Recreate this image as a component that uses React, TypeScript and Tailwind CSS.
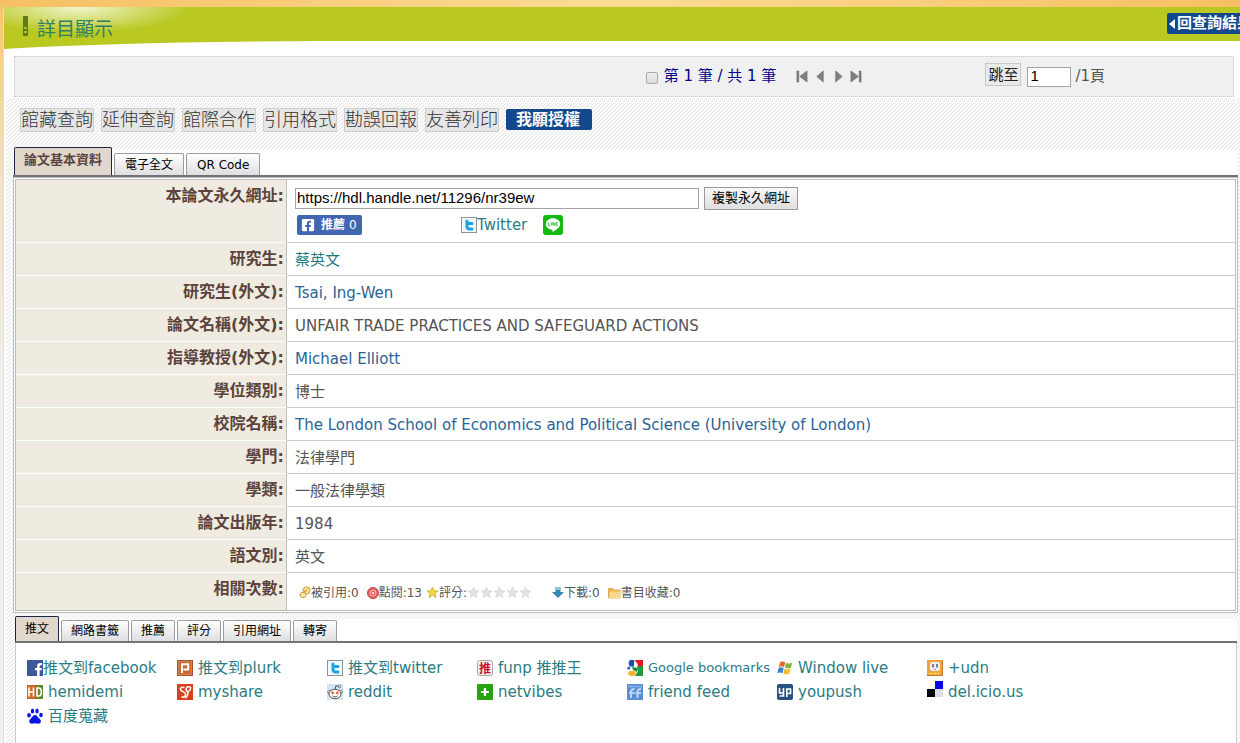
import type { ReactNode } from "react";
import { FaFacebookF, FaFacebookSquare } from "react-icons/fa";

const tools = ["館藏查詢", "延伸查詢", "館際合作", "引用格式", "勘誤回報", "友善列印"];

const TwitterIcon = () => (
  <svg viewBox="0 0 16 16" className="h-4 w-4 shrink-0" aria-hidden="true">
    <rect x="0.5" y="0.5" width="15" height="15" fill="#eef8fd" stroke="#8c9499" />
    <path d="M6 4v5.200c0 2 1 2.800 2.900 2.800H11M6 6.500h5" fill="none" stroke="#1ba4e0" strokeWidth="3" strokeLinecap="round" />
  </svg>
);

const LineIcon = () => (
  <svg viewBox="0 0 20 20" className="h-5 w-5 shrink-0" aria-hidden="true">
    <rect width="20" height="20" rx="3" fill="#13b90f" />
    <path d="M10 3.2c-4 0-7.2 2.6-7.2 5.8 0 2.9 2.6 5.3 6 5.7.9.1.7 1 .5 2.3 2.4-1.3 7.9-4 7.9-8 0-3.200-3.200-5.800-7.200-5.800z" fill="#fff" />
    <path d="M5.500 7.400v3.200h1.700M8.300 7.400v3.200M9.700 10.600V7.400l2 3.200V7.400M14.700 7.400h-1.600v3.200h1.600M13.100 9h1.400" fill="none" stroke="#13b90f" strokeWidth="0.8" />
  </svg>
);

const Star = ({ fill, stroke }: { fill: string; stroke: string }) => (
  <svg viewBox="0 0 13 13" className="h-[13px] w-[13px] shrink-0" aria-hidden="true">
    <path d="M6.500 1l1.500 3.700 4 .3-3.100 2.500 1 4-3.400-2.200-3.400 2.200 1-4L1 5l4-.3z" fill={fill} stroke={stroke} strokeWidth="0.7" />
  </svg>
);

const icons: Record<string, ReactNode> = {
  facebook: (
    <span className="flex h-4 w-4 shrink-0 items-end justify-end bg-[#3b5998]">
      <FaFacebookF className="h-[13px] w-[9px] text-white" />
    </span>
  ),
  plurk: (
    <svg viewBox="0 0 16 16" className="h-4 w-4 shrink-0">
      <rect width="16" height="16" fill="#a0522d" />
      <rect x="1.500" y="1.500" width="13" height="13" fill="#cf682f" stroke="#e0a37c" strokeWidth="0.6" />
      <path d="M5 13V4.200h6.200v5.200H6.500" fill="none" stroke="#fff" strokeWidth="2" />
    </svg>
  ),
  twitter: <TwitterIcon />,
  funp: (
    <svg viewBox="0 0 16 16" className="h-4 w-4 shrink-0">
      <rect x="0.500" y="0.500" width="15" height="15" rx="2" fill="#f5f0f0" stroke="#aaa" />
      <text x="8" y="12.500" fontSize="12" fontWeight="700" textAnchor="middle" fill="#c8102e">推</text>
    </svg>
  ),
  google: (
    <svg viewBox="0 0 16 16" className="h-4 w-4 shrink-0">
      <path d="M8 0h8v6h-5z" fill="#e01a1a" />
      <path d="M10 6h6v10H8l3-5z" fill="#249a3c" />
      <ellipse cx="5" cy="3.200" rx="3.300" ry="3.600" fill="#1c4fa8" />
      <path d="M7 1l4 3-2 3-2-1z" fill="#fff" />
      <circle cx="1.800" cy="8" r="1.600" fill="#2861b8" />
      <path d="M5 7l6 1-1 4-4-2z" fill="#1e8b35" />
      <ellipse cx="5" cy="13.300" rx="3.800" ry="2.600" fill="#f4b32a" />
    </svg>
  ),
  windows: (
    <svg viewBox="0 0 16 16" className="h-4 w-4 shrink-0">
      <path d="M3 2.500c2-1.500 3.600-1.200 5.200-.2L7 7.200C5.300 6.200 3.800 6 1.800 7.200z" fill="#e8622c" />
      <path d="M9 2.700c2 1 4 1 6.300-.2L14 7.500c-2 1.200-4.200 1.200-6.200.1z" fill="#7eb93c" />
      <path d="M1.500 8.200C3.400 7 5 7.200 6.700 8.200l-1.300 5c-1.700-1-3.300-1-5.200 0z" fill="#3b83cc" />
      <path d="M7.500 8.700c2 1 4 1 6.200-.2l-1.300 5c-2 1.200-4.300 1.200-6.200.1z" fill="#f3bd32" />
    </svg>
  ),
  udn: (
    <svg viewBox="0 0 16 16" className="h-4 w-4 shrink-0">
      <rect width="16" height="16" fill="#c9782a" />
      <rect width="15" height="15" fill="#efa13c" />
      <rect x="3" y="2" width="10" height="9" rx="2" fill="#f0eeee" />
      <path d="M6 4v3.500M10 4v3.500" stroke="#333" strokeWidth="1.200" />
      <path d="M7 9h2l-1 1z" fill="#333" />
      <path d="M2 13.500h11" stroke="#ffe34a" strokeWidth="1.500" strokeDasharray="2 .6" />
    </svg>
  ),
  hemidemi: (
    <svg viewBox="0 0 16 16" className="h-4 w-4 shrink-0">
      <rect y="1" width="8" height="14" fill="#d9661f" />
      <rect x="8" y="1" width="8" height="14" fill="#5f8a2a" />
      <path d="M2 3.500v9M6.500 3.500v9M2 8h4.500M10 3.500v9M9.200 4h2.300c3.800 0 3.800 8 0 8H9.200" fill="none" stroke="#fff" strokeWidth="1.700" />
    </svg>
  ),
  myshare: (
    <svg viewBox="0 0 16 16" className="h-4 w-4 shrink-0">
      <rect width="16" height="16" fill="#d9401c" />
      <path d="M7.500 3.500C4 2.500 2 5 4.500 6.800c3 1.700 5 2.500 3.500 5.200-.8 1.500-2.500 1.500-3.500.5M13.500 3c-4-1-5.500 2-3.500 4.500 2.500-.3 4-1.500 3.500-4.500M11 8c0 3-1 5-3 6" fill="none" stroke="#fff" strokeWidth="1.500" />
    </svg>
  ),
  reddit: (
    <svg viewBox="0 0 16 16" className="h-4 w-4 shrink-0">
      <rect width="16" height="16" fill="#d5e4f3" />
      <circle cx="2.300" cy="7.800" r="1.600" fill="#fff" stroke="#444" strokeWidth="0.700" />
      <circle cx="13.700" cy="7.800" r="1.600" fill="#fff" stroke="#444" strokeWidth="0.700" />
      <path d="M8 5.500l.8-3.700 3.400.7" fill="none" stroke="#444" strokeWidth="0.900" />
      <circle cx="12.500" cy="2.500" r="1.200" fill="#fff" stroke="#444" strokeWidth="0.700" />
      <ellipse cx="8" cy="10" rx="6" ry="4.700" fill="#fff" stroke="#444" strokeWidth="0.900" />
      <circle cx="5.700" cy="8.900" r="1.300" fill="#f0522a" />
      <circle cx="10.300" cy="8.900" r="1.300" fill="#f0522a" />
      <path d="M5.300 11.800c1.600 1.400 3.800 1.400 5.400 0" fill="none" stroke="#444" strokeWidth="0.900" />
    </svg>
  ),
  netvibes: (
    <svg viewBox="0 0 16 16" className="h-4 w-4 shrink-0">
      <rect width="16" height="16" rx="1" fill="#27a312" />
      <path d="M8 4v8M4 8h8" stroke="#fff" strokeWidth="2.200" />
    </svg>
  ),
  friendfeed: (
    <svg viewBox="0 0 16 16" className="h-4 w-4 shrink-0">
      <rect width="16" height="16" fill="#5a8fd6" />
      <path d="M4 14V7.500C4 5.500 5.500 5 7.500 5M2 9h5.500M10.500 14V7.500c0-2 1.500-2.500 3.500-2.500M8.500 9H14" fill="none" stroke="#b9d6fa" strokeWidth="2" />
      <path d="M1 2.500h14" stroke="#86b0e8" strokeWidth="1.500" />
    </svg>
  ),
  youpush: (
    <svg viewBox="0 0 16 16" className="h-4 w-4 shrink-0">
      <rect width="16" height="16" rx="2" fill="#26507f" />
      <path d="M2.500 4v5h4M6.500 4v8h-4M9.800 13V5h3.700v4.500h-3" fill="none" stroke="#fff" strokeWidth="1.700" />
    </svg>
  ),
  delicious: (
    <svg viewBox="0 0 16 16" className="-mt-1.5 h-4 w-4 shrink-0">
      <rect width="8" height="8" fill="#fff" />
      <rect x="8" width="8" height="8" fill="#0000e0" />
      <rect y="8" width="8" height="8" fill="#000" />
      <rect x="8" y="8" width="8" height="8" fill="#dcdce4" />
    </svg>
  ),
  baidu: (
    <svg viewBox="0 0 16 16" className="h-4 w-4 shrink-0" fill="#0a14e6">
      <ellipse cx="2" cy="7.200" rx="1.800" ry="2.300" />
      <ellipse cx="5.500" cy="3" rx="1.700" ry="2.500" />
      <ellipse cx="10" cy="3" rx="1.700" ry="2.500" />
      <ellipse cx="14" cy="7" rx="1.800" ry="2.300" />
      <path d="M8 7c2 0 2.600 2 4 3.200 1.700 1.500 2.300 2.600 1.600 4.300-1 2-3.600.8-5.600.8s-4.500 1.200-5.500-.8c-.7-1.700 0-2.800 1.600-4.300C5.400 9 6 7 8 7z" />
    </svg>
  ),
};

const shares = [
  { icon: "facebook", label: "推文到facebook", tight: true },
  { icon: "plurk", label: "推文到plurk" },
  { icon: "twitter", label: "推文到twitter" },
  { icon: "funp", label: "funp 推推王" },
  { icon: "google", label: "Google bookmarks", small: true },
  { icon: "windows", label: "Window live" },
  { icon: "udn", label: "+udn" },
  { icon: "hemidemi", label: "hemidemi" },
  { icon: "myshare", label: "myshare" },
  { icon: "reddit", label: "reddit" },
  { icon: "netvibes", label: "netvibes" },
  { icon: "friendfeed", label: "friend feed" },
  { icon: "youpush", label: "youpush" },
  { icon: "delicious", label: "del.icio.us" },
  { icon: "baidu", label: "百度蒐藏" },
];

const Row = ({ label, children }: { label: string; children: ReactNode }) => (
  <tr className="group">
    <th
      scope="row"
      className="border-r border-b border-r-[#bdbdbd] border-b-white bg-[#efebe0] py-1 pr-0.5 text-right align-top text-base leading-6 font-bold text-[#5c443c] group-last:border-b-0"
    >
      {label}:
    </th>
    <td className="border-b border-[#ccc] bg-white pt-[5px] pb-[3px] pl-2 align-top leading-6 group-last:border-b-0">
      {children}
    </td>
  </tr>
);

const Tab = ({ active, bold, children }: { active?: boolean; bold?: boolean; children: ReactNode }) => {
  if (active) {
    return (
      <button
        role="tab"
        aria-selected="true"
        className={
          bold
            ? "h-7 rounded-t-xs border border-b-0 border-[#1f2740] bg-[#e0d8cc] px-[9px] pb-1 text-[13px] font-bold text-[#5c443c]"
            : "h-[25px] rounded-t-xs border border-b-0 border-[#1f2740] bg-[#e0d8cc] px-[9px] text-xs text-black"
        }
      >
        {children}
      </button>
    );
  }
  return (
    <button
      role="tab"
      aria-selected="false"
      className={
        bold
          ? "h-[22px] rounded-t-xs border border-b-0 border-[#9c9c9c] bg-linear-to-b from-white to-[#dfdfe2] px-[10px] text-xs text-black"
          : "h-[21px] rounded-t-xs border border-b-0 border-[#9c9c9c] bg-linear-to-b from-white to-[#dfdfe2] px-[9px] text-xs text-black"
      }
    >
      {children}
    </button>
  );
};

const Pager = () => (
  <div className="flex h-[41px] items-center justify-end border border-dotted border-[#c4c4c4] bg-[#f0f0f0] pr-32">
    <input type="checkbox" id="pick" className="mt-0.5 h-3 w-3 appearance-none rounded-xs border border-[#aaa] bg-linear-to-b from-[#eee] to-[#dcdcdc]" />
    <label htmlFor="pick" className="ml-1.5 text-[#00008b]">第 1 筆 / 共 1 筆</label>
    <div className="ml-5 flex gap-1.5">
      {[
        ["第一筆", "M1 1h2v12H1zM12 1v12L4 7z"],
        ["上一筆", "M10 1v12L3 7z"],
        ["下一筆", "M4 1v12l7-6z"],
        ["最後一筆", "M1 1v12l8-6zM10 1h2v12h-2z"],
      ].map(([name, d]) => (
        <button key={name} aria-label={name}>
          <svg viewBox="0 0 13 14" className="h-[13px] w-3">
            <path d={d} fill="#808080" stroke="#5e5e5e" strokeWidth="0.6" />
          </svg>
        </button>
      ))}
    </div>
    <button className="mb-1 ml-[123px] h-[23px] border border-[#c8c8c8] bg-[#e9e9e9] px-0.5 text-[15px] leading-5 text-[#222]">跳至</button>
    <input
      aria-label="頁碼"
      defaultValue="1"
      className="ml-1.5 h-5 w-11 border border-[#a5a5a5] bg-white px-0.5 font-['Liberation_Sans',sans-serif] text-[15px] text-black"
    />
    <span className="ml-1">/1頁</span>
  </div>
);

const Counts = () => (
  <div className="flex h-[29px] items-center pl-1 text-xs">
    <svg viewBox="0 0 12 13" className="h-[13px] w-3">
      <ellipse cx="7.500" cy="4.500" rx="3.600" ry="3.600" fill="#f5dc8c" stroke="#cf9f3d" />
      <ellipse cx="4" cy="9" rx="3" ry="2.600" fill="#fbe9ae" stroke="#cf9f3d" />
      <path d="M5 6l3-2" stroke="#b98a30" />
    </svg>
    <span>被引用:0</span>
    <svg viewBox="0 0 12 12" className="ml-2 h-3 w-3">
      <circle cx="6" cy="6" r="5.500" fill="#e35b60" stroke="#c54a4a" />
      <circle cx="6" cy="6" r="3" fill="none" stroke="#f9c4c4" />
      <circle cx="6" cy="6" r="1.200" fill="#fbdada" />
    </svg>
    <span className="mr-1">點閱:13</span>
    <Star fill="#f0d93a" stroke="#c0a422" />
    <span>評分:</span>
    <span className="flex">
      {[1, 2, 3, 4, 5].map((n) => (
        <Star key={n} fill="#e2e2e2" stroke="#d4d4d4" />
      ))}
    </span>
    <svg viewBox="0 0 12 13" className="ml-5 h-[13px] w-3">
      <path d="M3.500 1h5v5H12l-6 6-6-6h3.500z" fill="#3585b5" />
      <path d="M4 1h4v3H4z" fill="#8fc4e2" />
    </svg>
    <span>下載:0</span>
    <svg viewBox="0 0 13 12" className="ml-2 h-3 w-[13px]">
      <path d="M.5 1.500h4.500l1 1.500h6v8H.5z" fill="#e9b64d" stroke="#d59e3a" strokeWidth="0.700" />
      <path d="M2 4.500h10.500L12 11H1z" fill="#f7d88a" />
    </svg>
    <span>書目收藏:0</span>
  </div>
);

export default function App() {
  return (
    <div className="flex min-h-screen flex-col overflow-hidden bg-linear-to-b from-[#f9c46a] via-[#f3e2c4] via-25% to-[#f1f1f1] to-55% font-['DejaVu_Sans','Noto_Sans_CJK_TC',sans-serif] text-[15px] text-[#555]">
      <div className="h-[7px] bg-linear-to-r from-[#f7bf62] via-[#fbdc94] to-[#f7bf62]" />
      <div className="ml-[3px] flex flex-1 flex-col border-l border-[#ddd] bg-white">
        <header className="relative flex h-[34px] items-start bg-[#b9c922] bg-[radial-gradient(ellipse_110px_26px_at_75px_0px,#f1f5cf,transparent)]">
          {/* curved lower edge of the banner */}
          <svg viewBox="0 0 320 8" preserveAspectRatio="none" className="absolute top-full left-0 h-2 w-80" aria-hidden="true">
            <path d="M0 0h320Q120 1 0 8z" fill="#b9c922" />
          </svg>
          <svg viewBox="0 0 5 20" className="mt-[9px] ml-[19px] h-5 w-[5px]" aria-hidden="true">
            <path d="M0 0h5v20H0z" fill="#5f7a16" />
            <path d="M1.500 11h2v2h-2zM1.500 15h2v2h-2z" fill="#c9d66a" />
          </svg>
          <h1 className="mt-2 ml-[9px] text-[19px] leading-7 text-[#2f7f68]">詳目顯示</h1>
          <button className="mt-[6px] -mr-3 ml-auto flex h-[21px] shrink-0 items-center rounded-xs bg-[#12498c] pl-0.5 text-[15px] font-bold whitespace-nowrap text-white">
            <svg viewBox="0 0 6 10" className="mr-0.5 h-2.5 w-1.5" aria-hidden="true">
              <path d="M6 0v10L0 5z" fill="#fff" />
            </svg>
            回查詢結果
          </button>
        </header>

        <div className="pt-[15px] pr-1.5 pb-px pl-2.5">
          <Pager />
        </div>

        <main className="ml-0.5 flex flex-1 flex-col bg-[linear-gradient(135deg,#e3e3e3_12.5%,#fcfcfc_12.5%,#fcfcfc_50%,#e3e3e3_50%,#e3e3e3_62.5%,#fcfcfc_62.5%)] bg-size-[4px_4px] pr-0.5 pl-[7px]">
          <div className="flex h-[52px] items-start gap-[7px] pt-[10px] pl-[7px]">
            {tools.map((t) => (
              <button key={t} className="h-6 border border-[#cfcfcf] bg-[#e6e6e6] text-lg leading-[22px] font-light text-[#333]">
                {t}
              </button>
            ))}
            <button className="mt-px h-[21px] rounded-xs bg-[#12498c] pr-3 pl-2.5 text-base leading-5 font-bold text-white">我願授權</button>
          </div>

          <div role="tablist" className="flex h-[27px] items-end gap-0.5 border-b-2 border-[#737373] bg-white pl-px">
            <Tab active bold>論文基本資料</Tab>
            <Tab bold>電子全文</Tab>
            <Tab bold>QR Code</Tab>
          </div>

          <div className="border-3 border-double border-[#bdbdbd] bg-white">
            <table className="w-full table-fixed border-separate border-spacing-0">
              <colgroup>
                <col className="w-[271px]" />
                <col />
              </colgroup>
              <tbody>
                <Row label="本論文永久網址">
                  <div className="flex h-[26px] items-center gap-[5px]">
                    <input
                      aria-label="本論文永久網址"
                      readOnly
                      value="https://hdl.handle.net/11296/nr39ew"
                      className="h-[21px] w-[404px] border border-[#a5a5a5] px-px font-['Liberation_Sans',sans-serif] text-[15px] text-black"
                    />
                    <button className="h-[23px] border border-[#999] bg-linear-to-b from-[#f8f8f8] to-[#dedede] px-[7px] text-[13px] leading-5 text-black">
                      複製永久網址
                    </button>
                  </div>
                  <div className="flex h-7 items-center pl-0.5">
                    <button className="flex h-5 w-[65px] items-center rounded-xs bg-[#4267b2] pl-1 text-xs text-white">
                      <FaFacebookSquare className="h-[14px] w-[14px]" />
                      <span className="ml-1.5 font-bold">推薦</span>
                      <span className="ml-1">0</span>
                    </button>
                    <a href="#twitter" className="ml-[99px] flex items-center text-[#2b7b83]">
                      <TwitterIcon />
                      Twitter
                    </a>
                    <a href="#line" aria-label="LINE" className="ml-4">
                      <LineIcon />
                    </a>
                  </div>
                </Row>
                <Row label="研究生">
                  <a href="#author" className="text-[#1f7a83]">蔡英文</a>
                </Row>
                <Row label="研究生(外文)">
                  <a href="#author-en" className="text-[#2a6496]">Tsai, Ing-Wen</a>
                </Row>
                <Row label="論文名稱(外文)">UNFAIR TRADE PRACTICES AND SAFEGUARD ACTIONS</Row>
                <Row label="指導教授(外文)">
                  <a href="#advisor" className="text-[#2a6496]">Michael Elliott</a>
                </Row>
                <Row label="學位類別">博士</Row>
                <Row label="校院名稱">
                  <a href="#school" className="text-[#2a6496]">
                    The London School of Economics and Political Science (University of London)
                  </a>
                </Row>
                <Row label="學門">法律學門</Row>
                <Row label="學類">一般法律學類</Row>
                <Row label="論文出版年">1984</Row>
                <Row label="語文別">英文</Row>
                <Row label="相關次數">
                  <Counts />
                </Row>
              </tbody>
            </table>
          </div>

          <div role="tablist" className="mt-1.5 mr-px ml-0.5 flex h-6 items-end gap-0.5 border-b-2 border-[#737373] bg-white">
            <Tab active>推文</Tab>
            <Tab>網路書籤</Tab>
            <Tab>推薦</Tab>
            <Tab>評分</Tab>
            <Tab>引用網址</Tab>
            <Tab>轉寄</Tab>
          </div>

          <div className="mr-px ml-0.5 flex-1 border-x border-[#ccc] bg-white pt-[13px] pl-[11px]">
            <ul className="grid grid-cols-[repeat(7,150px)]">
              {shares.map((s) => (
                <li key={s.label} className="h-6">
                  <a
                    href={`#${s.icon}`}
                    className={s.small ? "flex items-center gap-[5px] text-[13px] leading-6 whitespace-nowrap text-[#2b7b83]" : "flex items-center leading-6 whitespace-nowrap text-[#2b7b83]"}
                  >
                    {icons[s.icon]}
                    <span className={s.tight || s.small ? "" : "ml-[5px]"}>{s.label}</span>
                  </a>
                </li>
              ))}
            </ul>
          </div>
        </main>
      </div>
    </div>
  );
}
